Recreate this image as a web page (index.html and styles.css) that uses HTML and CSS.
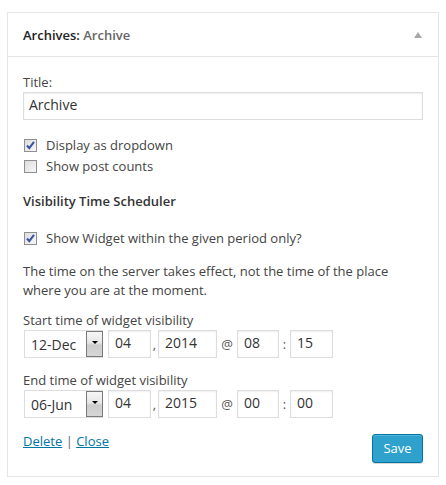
FILE: index.html
```html
<!DOCTYPE html>
<html>
<head>
<meta charset="utf-8">
<link rel="stylesheet" href="styles.css">
</head>
<body>
<div class="widget">
  <div class="widget-top">
    <h3 class="widget-title">Archives: <span class="in-title">Archive</span></h3>
    <span class="toggle"></span>
  </div>
  <div class="inside">
    <div class="label">Title:</div>
    <div class="field title-field">Archive</div>

    <div class="check-row first">
      <span class="cb checked"><svg width="11" height="11" viewBox="0 0 11 11"><path d="M2 5.5 L4.3 8.2 L9 1.8" fill="none" stroke="#3853a4" stroke-width="2"/></svg></span>
      <span>Display as dropdown</span>
    </div>
    <div class="check-row">
      <span class="cb"></span>
      <span>Show post counts</span>
    </div>

    <h4 class="section">Visibility Time Scheduler</h4>

    <div class="check-row third">
      <span class="cb checked"><svg width="11" height="11" viewBox="0 0 11 11"><path d="M2 5.5 L4.3 8.2 L9 1.8" fill="none" stroke="#3853a4" stroke-width="2"/></svg></span>
      <span>Show Widget within the given period only?</span>
    </div>

    <p class="note">The time on the server takes effect, not the time of the place where you are at the moment.</p>

    <div class="label start">Start time of widget visibility</div>
    <div class="date-row">
      <div class="select"><span class="sel-text">12-Dec</span><span class="sel-btn"><span class="tri"></span></span></div>
      <div class="field day">04</div>
      <span class="sep comma">,</span>
      <div class="field year">2014</div>
      <span class="sep at">@</span>
      <div class="field hour">08</div>
      <span class="sep colon">:</span>
      <div class="field min">15</div>
    </div>

    <div class="label end">End time of widget visibility</div>
    <div class="date-row">
      <div class="select"><span class="sel-text">06-Jun</span><span class="sel-btn"><span class="tri"></span></span></div>
      <div class="field day">04</div>
      <span class="sep comma">,</span>
      <div class="field year">2015</div>
      <span class="sep at">@</span>
      <div class="field hour">00</div>
      <span class="sep colon">:</span>
      <div class="field min">00</div>
    </div>

    <div class="footer">
      <div class="links"><a href="#">Delete</a> | <a href="#">Close</a></div>
      <div class="save">Save</div>
    </div>
  </div>
</div>
</body>
</html>
```

FILE: styles.css
```css
html, body {
  margin: 0;
  padding: 0;
  background: #fff;
}
body {
  font-family: "Open Sans", "Liberation Sans", sans-serif;
  font-size: 13px;
  line-height: 19px;
  color: #444;
}
.widget {
  margin: 12px 7px 0 7px;
  border: 1px solid #e5e5e5;
  box-shadow: 0 1px 1px rgba(0,0,0,0.04);
  background: #fff;
}
.widget-top {
  height: 43px;
  border-bottom: 1px solid #e5e5e5;
  display: flex;
  align-items: center;
  justify-content: space-between;
  padding: 0 16px 0 15px;
}
.widget-title {
  margin: 0;
  font-size: 13px;
  font-weight: 600;
  color: #222;
  line-height: 19px;
  padding-top: 1px;
}
.in-title {
  color: #666;
}
.toggle {
  width: 0;
  height: 0;
  border-left: 4px solid transparent;
  border-right: 4px solid transparent;
  border-bottom: 6px solid #a8a8a8;
  margin-top: 1px;
}
.inside {
  padding: 16px 15px 13px 15px;
}
.label {
  line-height: 19px;
}
.field {
  box-sizing: border-box;
  height: 28px;
  border: 1px solid #ddd;
  box-shadow: inset 0 1px 2px rgba(0,0,0,0.07);
  background: #fff;
  font-size: 14px;
  color: #333;
  line-height: 24px;
  padding: 0 6px;
}
.title-field {
  width: 400px;
  padding-left: 5px;
}
.check-row {
  display: flex;
  align-items: center;
  height: 21px;
}
.check-row.first {
  margin-top: 15px;
}
.check-row.third {
  margin-top: 17px;
}
.cb {
  box-sizing: border-box;
  width: 13px;
  height: 13px;
  margin-left: 1px;
  margin-right: 9px;
  border: 1px solid #8f8f8f;
  background: linear-gradient(135deg, #dcdcdc, #f8f8f8);
  display: flex;
  align-items: center;
  justify-content: center;
}
.section {
  margin: 15px 0 0 0;
  font-size: 13px;
  font-weight: 600;
  color: #333;
  line-height: 19px;
}
.note {
  margin: 13px 0 0 0;
  line-height: 19px;
}
.label.start {
  margin-top: 11px;
}
.label.end {
  margin-top: 13px;
}
.date-row {
  display: flex;
  align-items: center;
  margin-left: 1px;
}
.select {
  box-sizing: border-box;
  width: 79px;
  height: 28px;
  border: 1px solid #ddd;
  border-right: none;
  display: flex;
  align-items: center;
  font-size: 14px;
  color: #333;
}
.sel-text {
  flex: 1;
  padding-left: 6px;
}
.sel-btn {
  box-sizing: border-box;
  width: 17px;
  height: 26px;
  border: 1px solid #7a7a7a;
  background: linear-gradient(#f6f6f6 0%, #e6e6e6 45%, #cccccc 55%, #d6d6d6 100%);
  display: flex;
  justify-content: center;
  padding-top: 9px;
}
.tri {
  width: 0;
  height: 0;
  border-left: 3px solid transparent;
  border-right: 3px solid transparent;
  border-top: 3px solid #000;
}
.date-row .day {
  margin-left: 5px;
  width: 43px;
}
.date-row .year {
  width: 59px;
}
.date-row .hour {
  width: 42px;
}
.date-row .min {
  width: 43px;
}
.sep {
  text-align: center;
  font-size: 13px;
  color: #555;
}
.sep.comma {
  width: 7px;
}
.sep.at {
  width: 20px;
}
.sep.colon {
  width: 11px;
}
.footer {
  margin-top: 14px;
  display: flex;
  justify-content: space-between;
  align-items: flex-start;
}
.links {
  line-height: 19px;
  color: #666;
}
.links a {
  color: #0074a2;
  text-decoration: underline;
}
.save {
  box-sizing: border-box;
  margin-top: 2px;
  height: 29px;
  width: 51px;
  border: 1px solid #0074a2;
  border-radius: 3px;
  background: #2ea2cc;
  box-shadow: inset 0 1px 0 rgba(120,200,230,0.5), 0 1px 0 rgba(0,0,0,0.15);
  color: #fff;
  font-size: 13px;
  line-height: 26px;
  text-align: center;
}
```
